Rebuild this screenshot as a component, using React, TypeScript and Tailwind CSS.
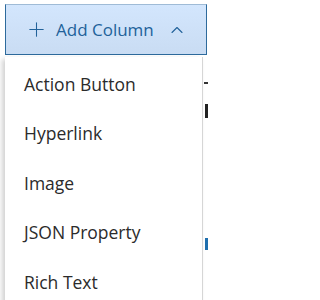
import { Plus, ChevronUp } from "lucide-react"

const items = ["Action Button", "Hyperlink", "Image", "JSON Property", "Rich Text"]

export default function App() {
  return (
    <div className="relative w-[208px] h-[300px] overflow-hidden bg-white font-['Open_Sans',sans-serif]">
      {/* bits of the page behind the menu */}
      <div className="absolute right-0 top-[82px] h-[2px] w-[4px] bg-[#333]" />
      <div className="absolute right-0 top-[104px] h-[14px] w-[3px] bg-[#222]" />
      <div className="absolute right-0 top-[238px] h-[12px] w-[3px] bg-[#1f6fae]" />

      <div className="pt-[4px] pl-[5px]">
        <button className="flex h-[51px] w-[202px] items-center border border-[#2d6a9c] border-t-[#9fbbd6] bg-gradient-to-b from-[#d3e6fd] to-[#c9dcf3] text-[#22629a]">
          <Plus className="ml-[19px] h-[23px] w-[23px]" strokeWidth={1.1} />
          <span className="ml-[8px] text-[17px] leading-none">Add Column</span>
          <ChevronUp className="ml-[13px] h-[20px] w-[20px]" strokeWidth={1.3} />
        </button>

        <div className="mt-[2px] w-[198px] border-r border-[#d6d6d6] bg-white shadow-[-3px_2px_5px_rgba(0,0,0,0.18)]">
          <div className="flex flex-col pt-[2px] pb-[2px]">
            {items.map((item) => (
              <div key={item} className="flex h-[49.5px] items-center pl-[19px] text-[17.5px] text-[#2b2b2b]">
                {item}
              </div>
            ))}
          </div>
        </div>
      </div>
    </div>
  )
}
